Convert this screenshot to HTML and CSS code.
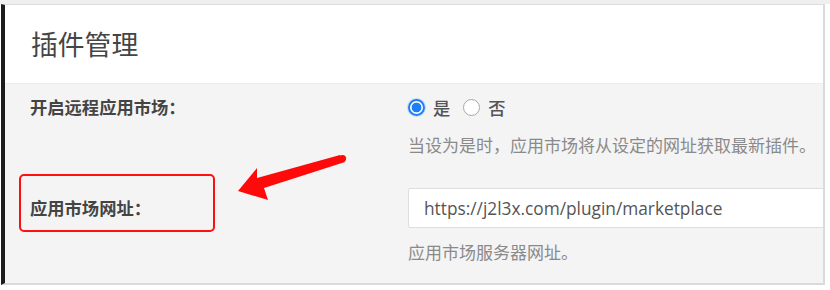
FILE: index.html
```html
<!DOCTYPE html>
<html lang="zh-CN">
<head>
  <meta charset="UTF-8" />
  <title>插件管理</title>
  <link rel="stylesheet" href="styles.css">
</head>
<body>

  <div class="top-strip"></div>

  <div class="panel">
    <div class="panel-header">插件管理</div>

    <div class="panel-body">
      <div class="field">
        <div class="field-label">开启远程应用市场：</div>
        <div class="field-control">
          <div class="radio-group">
            <label class="radio-option"><input type="radio" name="remote" checked> 是</label>
            <label class="radio-option"><input type="radio" name="remote"> 否</label>
          </div>
          <div class="field-help">当设为是时，应用市场将从设定的网址获取最新插件。</div>
        </div>
      </div>

      <div class="field field-url">
        <div class="field-label">应用市场网址：</div>
        <div class="field-control">
          <input class="text-input" type="text" value="https://j2l3x.com/plugin/marketplace">
          <div class="field-help">应用市场服务器网址。</div>
        </div>
      </div>
    </div>
  </div>

  <!-- annotation marks drawn over the screenshot -->
  <div class="mark-box"></div>
  <svg class="mark-arrow" width="830" height="290" viewBox="0 0 830 290">
    <polygon points="238,191 257,168 257,178 340,155 345,162 264,188 268,200" fill="#ff0a0a"/>
    <circle cx="342.5" cy="158.5" r="3.6" fill="#ff0a0a"/>
  </svg>

</body>
</html>
```

FILE: styles.css
```css
body {
  margin: 0;
  background: #fff;
  font-family: "Noto Sans CJK SC", "Noto Sans", sans-serif;
  color: #444;
  width: 830px;
  height: 290px;
  overflow: hidden;
  position: relative;
}

.top-strip {
  height: 4px;
  background: #efefef;
}

.panel {
  margin-left: 1px;
  width: 818px;
  border-top: 1px solid #dcdcdc;
  border-left: 4px solid #1c1c1c;
  border-right: 2px solid #dadada;
  border-bottom: 2px solid #dadada;
  overflow: hidden;
}

.panel-header {
  height: 78px;
  line-height: 78px;
  padding-left: 26px;
  font-size: 26.8px;
  color: #454545;
  background: #fff;
  border-bottom: 1px solid #ececec;
}

.panel-body {
  background: #f4f4f4;
  padding: 11px 0 19px;
}

.field {
  display: grid;
  grid-template-columns: 403px 1fr;
}

.field-url {
  margin-top: 31px;
}

.field-label {
  padding-left: 25px;
  font-size: 17.3px;
  font-weight: bold;
  color: #444;
  line-height: 24px;
  white-space: nowrap;
}

.field-url .field-label {
  align-self: start;
  margin-top: 8px;
}

.field-control {
  min-width: 0;
}

.radio-group {
  display: flex;
  gap: 13px;
  height: 24px;
  align-items: center;
}

.radio-option {
  display: flex;
  align-items: center;
  gap: 8px;
  font-size: 17.3px;
  color: #555;
  font-weight: 500;
}

.radio-option input {
  appearance: none;
  margin: 0;
  width: 17px;
  height: 17px;
  border-radius: 50%;
  border: 1.5px solid #a8a8a8;
  background: #fff;
  box-sizing: border-box;
}

.radio-option input:checked {
  border: 2px solid #1f7ef4;
  background: radial-gradient(circle, #1f7ef4 0 4.6px, #fff 5.2px);
  box-shadow: 0 0 0 1px rgba(31, 126, 244, 0.2);
}

.field-help {
  margin-top: 14px;
  font-size: 17px;
  line-height: 24px;
  color: #8a8a8a;
  white-space: nowrap;
}

.field-url .field-help {
  margin-top: 12px;
}

.text-input {
  display: block;
  width: 460px;
  height: 40px;
  box-sizing: border-box;
  border: 1px solid #dedede;
  border-radius: 2px;
  background: #fff;
  padding: 0 15px;
  font-family: "Open Sans", sans-serif;
  font-size: 17.3px;
  color: #555;
  outline: none;
}

.mark-box {
  position: absolute;
  left: 19px;
  top: 174px;
  width: 196px;
  height: 58px;
  box-sizing: border-box;
  border: 2px solid #ff1010;
  border-radius: 5px;
}

.mark-arrow {
  position: absolute;
  left: 0;
  top: 0;
  pointer-events: none;
}
```
